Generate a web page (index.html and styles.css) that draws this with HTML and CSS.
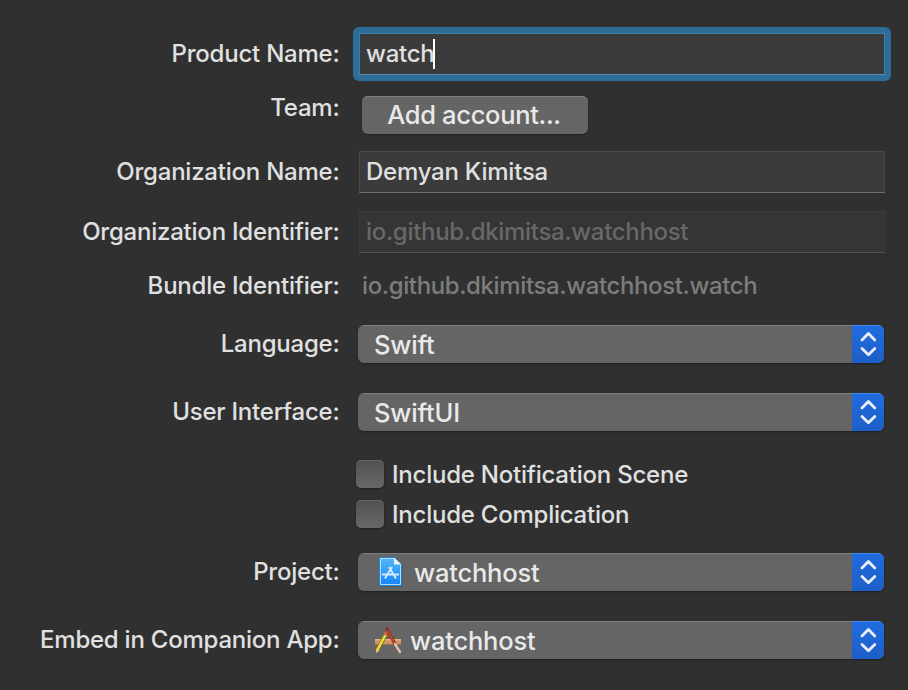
FILE: index.html
```html
<!DOCTYPE html>
<html lang="en">
<head>
<meta charset="utf-8">
<title>Project options</title>
<link rel="stylesheet" href="styles.css">
</head>
<body>
<svg class="defs" width="0" height="0" aria-hidden="true">
  <symbol id="arrows" viewBox="0 0 32 38"><path d="M10 15 16.400 8.600 22.800 15M10 23.400 16.400 29.800 22.800 23.400"/></symbol>
</svg>
<main class="form">
  <div class="row row-name"><label class="label">Product Name:</label><div class="field focused"><span>watch</span><i class="caret"></i></div></div>
  <div class="row row-team"><label class="label team">Team:</label><button class="button"><span>Add account...</span></button></div>
  <div class="row row-org"><label class="label">Organization Name:</label><div class="field"><span>Demyan Kimitsa</span></div></div>
  <div class="row row-orgid"><label class="label">Organization Identifier:</label><div class="field disabled"><span>io.github.dkimitsa.watchhost</span></div></div>
  <div class="row row-bundle"><label class="label">Bundle Identifier:</label><div class="static"><span>io.github.dkimitsa.watchhost.watch</span></div></div>
  <div class="row row-lang"><label class="label">Language:</label><div class="popup"><span class="value">Swift</span><svg class="arrows"><use href="#arrows"/></svg></div></div>
  <div class="row row-ui"><label class="label">User Interface:</label><div class="popup"><span class="value">SwiftUI</span><svg class="arrows"><use href="#arrows"/></svg></div></div>
  <div class="row row-check first"><i class="box"></i><span>Include Notification Scene</span></div>
  <div class="row row-check"><i class="box"></i><span>Include Complication</span></div>
  <div class="row row-project"><label class="label">Project:</label><div class="popup">
    <svg class="icon icon-doc" width="26" height="32" viewBox="0 0 26 32">
      <defs><linearGradient id="doc" x1="0" y1="0" x2="0" y2="1"><stop offset="0" stop-color="#55b9f3"/><stop offset="1" stop-color="#1683fb"/></linearGradient></defs>
      <path d="M1 2h15l7.500 6.500V30.500H1z" fill="#303c47" opacity=".5"/>
      <path d="M.5 1.500H15.500l7 7V29.500H.5z" fill="url(#doc)" stroke="#1b86dc"/>
      <path d="M1.500 2.500H15M1.500 2.500V28.500H21.500V9" fill="none" stroke="#b2ddfa" stroke-width="1"/>
      <path d="M15 1.500 22.500 8.500H15z" fill="#eef1f3"/><path d="M16 1l7 7V1z" fill="#656565"/>
      <g fill="none" stroke="#d2eaff" stroke-width="1.900"><path d="M10 11 17 22.500M13 11 6 22.500M3 18.500H20"/></g>
    </svg>
    <span class="value">watchhost</span><svg class="arrows"><use href="#arrows"/></svg></div></div>
  <div class="row row-embed"><label class="label">Embed in Companion App:</label><div class="popup">
    <svg class="icon icon-app" width="30" height="30" viewBox="0 0 30 30">
      <path d="M2 14h26v6H2z" fill="#c99569"/><path d="M2 14h26v1.500H2z" fill="#e1b184"/><path d="M2 19h26v1H2z" fill="#9b6d48"/>
      <path d="M4 26 13.500 8" stroke="#8b7417" stroke-width="4"/><path d="M4 25.500 13 9" stroke="#f3d941" stroke-width="2.500"/>
      <path d="m12 10 2-3" stroke="#d7595a" stroke-width="3"/><path d="m3.500 24-.5 4 3.500-2.500z" fill="#e9caa0"/>
      <path d="M13.500 3 22 19" stroke="#8d2818" stroke-width="3.200"/><path d="M14.500 5 21.500 18" stroke="#d35028" stroke-width="1.500"/>
      <path d="m22 19 5 8" stroke="#dfc0ae" stroke-width="2.400" stroke-linecap="round"/>
    </svg>
    <span class="value">watchhost</span><svg class="arrows"><use href="#arrows"/></svg></div></div>
</main>
</body>
</html>
```
FILE: styles.css
```css
* { box-sizing: border-box; }
body { margin: 0; background: #303030; color: #e0e0e0; font: 450 24px/30px Inter, "Liberation Sans", sans-serif; letter-spacing: -0.23px; }
.defs { display: block; }
.form { width: 908px; height: 690px; padding-top: 33px; overflow: hidden; }
.row { display: flex; align-items: center; white-space: nowrap; }
.label { width: 339.5px; margin-right: .5px; flex: none; text-align: right; }
.field { display: flex; align-items: center; width: 526px; height: 42px; margin-left: 19px; padding-left: 6px; background: #3b3b3b; border: 1px solid #474747; border-top-color: #4b4b4b; border-bottom-color: #707070; }
.focused { position: relative; border-color: #3880aa; border-bottom-color: #5790b2; }
.focused::before { content: ""; position: absolute; inset: -7px; border: 6px solid #2e6d97; border-radius: 6px; }
.caret { width: 2px; height: 30px; margin-left: -2px; background: #fff; }
.disabled { background: #353535; border-color: #3b3b3b; border-bottom-color: #505050; color: #686868; letter-spacing: -0.32px; }
.row-team { margin-top: 21px; height: 38px; }
.team { margin-top: -15px; }
.button { width: 226px; height: 38px; margin-left: 22px; padding: 0 2px 0 0; border: 0; border-radius: 6px; background: #656565; color: #e9e9e9; font: 450 25.5px/38px Inter, "Liberation Sans", sans-serif; letter-spacing: -0.32px; box-shadow: inset 0 1px #808080, 0 1px 2px #202020; }
.row-org { margin-top: 17px; }
.row-orgid { margin-top: 18px; }
.row-bundle { margin-top: 18px; }
.static { margin-left: 22px; color: #7d7d7d; letter-spacing: -0.38px; }
.row-lang { margin-top: 24px; }
.row-ui { margin-top: 30px; }
.popup { display: flex; align-items: center; width: 526px; height: 38px; margin-left: 18px; padding-left: 16px; border-radius: 6px; overflow: hidden; background: #656565 linear-gradient(#808080 1px, transparent 1px); color: #e9e9e9; font-size: 25.5px; letter-spacing: -0.2px; box-shadow: 0 1px 2px #202020; }
.value { padding-top: 2px; }
.arrows { width: 32px; height: 38px; margin-left: auto; background: linear-gradient(#438aef 1px, #216be0 1px, #1d5fc8); fill: none; stroke: #e8effb; stroke-width: 2.8; stroke-linecap: round; stroke-linejoin: round; }
.row-check { height: 28px; margin-top: 12px; padding-left: 356px; }
.row-check span { padding-top: 2px; }
.row-check.first { margin-top: 29px; }
.box { width: 28px; height: 28px; margin-right: 8px; border-radius: 5px; background: linear-gradient(#505050, #686868); box-shadow: inset 0 1px #646464, 0 1px 2px #202020; }
.row-project { margin-top: 25px; }
.row-embed { margin-top: 30px; }
.icon { flex: none; }
.icon-doc { margin-left: 5px; margin-right: 9px; }
.icon-app { margin-left: -1px; margin-right: 7px; }
```
